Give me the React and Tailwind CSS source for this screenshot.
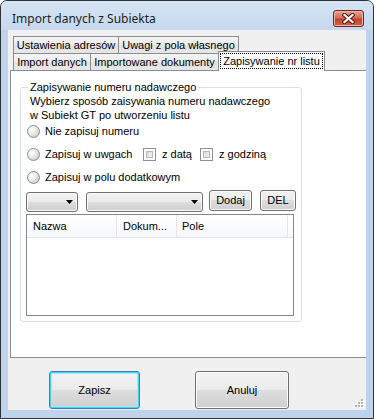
import React from 'react';

const btnBg = "bg-[linear-gradient(#f2f2f2,#ebebeb_50%,#dddddd_50%,#cfcfcf)]";
const tabBg = "bg-[linear-gradient(#f4f4f4,#ececec_50%,#e2e2e2_50%,#e6e6e6)]";

const Radio = () => (
  <svg width="13" height="13" viewBox="0 0 13 13" className="shrink-0">
    <defs>
      <radialGradient id="rg" cx="0.35" cy="0.35" r="0.7">
        <stop offset="0" stopColor="#ffffff" />
        <stop offset="0.6" stopColor="#e6e6e6" />
        <stop offset="1" stopColor="#c9c9c9" />
      </radialGradient>
    </defs>
    <circle cx="6.5" cy="6.5" r="6" fill="url(#rg)" stroke="#8e8f8f" />
  </svg>
);

const Check = () => (
  <div className="w-[13px] h-[13px] shrink-0 border border-[#8e8f8f] bg-white p-[2px]">
    <div className="w-full h-full border border-[#b6b8ba] bg-[linear-gradient(135deg,#d8d8d8,#f6f6f6)]" />
  </div>
);

const Combo = ({ w }) => (
  <div className={`${w} h-[20px] mt-[2px] rounded-[3px] border border-[#707070] ${btnBg} shadow-[inset_0_0_0_1px_#fbfbfb] flex items-center justify-end pr-[4px]`}>
    <svg width="7" height="4" viewBox="0 0 7 4"><path d="M0 0h7L3.5 4z" fill="#000" /></svg>
  </div>
);

const Tab = ({ w, label, first }) => (
  <div className={`${w} ${first ? '' : '-ml-px'} h-[17px] border border-b-0 border-[#898c95] ${tabBg} flex items-center justify-center leading-[13px]`}>
    {label}
  </div>
);

export default function App() {
  return (
    <div className="w-[374px] h-[419px] bg-white font-['Liberation_Sans',Arial,sans-serif] text-[11px] text-black">
      <div className="w-[374px] h-[419px] border border-[#2f3338] rounded-t-[7px] bg-[#bfd4ec] flex flex-col overflow-hidden">
        {/* title bar */}
        <div className="h-[29px] shrink-0 flex items-start pl-[11px] pr-[9px] bg-[linear-gradient(#d6e4f4,#c5d8ee)]">
          <span className="mt-[10px] text-[12px] leading-[16px] font-['Noto_Sans',sans-serif] text-[#1e1e1e]">Import danych z Subiekta</span>
          <div className="ml-auto mt-[9px] w-[31px] h-[17px] rounded-[3px] border border-[#6a2a1f] bg-[linear-gradient(#e8a594,#d26a55_45%,#c2412a_55%,#d0634a)] shadow-[inset_0_0_0_1px_#eeb3a4] flex items-center justify-center">
            <svg width="13" height="11" viewBox="0 0 13 11">
              <path d="M2.5 2 L10.5 9 M10.5 2 L2.5 9" stroke="#4d1a12" strokeWidth="4.2" strokeLinecap="square" />
              <path d="M2.5 2 L10.5 9 M10.5 2 L2.5 9" stroke="#ffffff" strokeWidth="2.2" strokeLinecap="square" />
            </svg>
          </div>
        </div>

        {/* client */}
        <div className="relative mx-[7px] h-[380px] bg-[#f0f0f0] flex flex-col overflow-hidden">
          <div className="mt-[6px] ml-[2px]">
            <div className="flex pl-[3px]">
              <Tab w="w-[106px]" label="Ustawienia adresów" first />
              <Tab w="w-[121px]" label="Uwagi z pola własnego" />
            </div>
            <div className="flex pl-[3px] h-[17px]">
              <Tab w="w-[78px]" label="Import danych" first />
              <Tab w="w-[129px]" label="Importowane dokumenty" />
              <div className="relative z-10 -ml-px -mt-[2px] w-[107px] h-[20px] shrink-0 border border-b-0 border-[#898c95] bg-white px-[1px] pt-[1px]">
                <div className="h-[16px] border border-dotted border-black flex items-center justify-center leading-[13px]">
                  Zapisywanie nr listu
                </div>
              </div>
            </div>

            {/* tab page */}
            <div className="w-[362px] h-[288px] border border-[#898c95] bg-white">
              <fieldset className="ml-[9px] mt-[10px] w-[280px] border border-[#d5dfe5] rounded-[3px]">
                <legend className="ml-[7px] px-[2px] leading-[13px]">Zapisywanie numeru nadawczego</legend>
                <div className="px-[5px] pb-[5px]">
                  <div className="pl-[4px] leading-[14px]">
                    <div>Wybierz sposób zaisywania numeru nadawczego</div>
                    <div>w Subiekt GT po utworzeniu listu</div>
                  </div>
                  <div className="flex items-center h-[19px] pl-[1px] gap-[5px]">
                    <Radio />
                    <span>Nie zapisuj numeru</span>
                  </div>
                  <div className="flex items-center h-[19px] mt-[4px] pl-[1px]">
                    <Radio />
                    <span className="ml-[5px] w-[98px]">Zapisuj w uwgach</span>
                    <Check />
                    <span className="ml-[6px] w-[38px]">z datą</span>
                    <Check />
                    <span className="ml-[6px]">z godziną</span>
                  </div>
                  <div className="flex items-center h-[19px] mt-[4px] pl-[1px] gap-[5px]">
                    <Radio />
                    <span>Zapisuj w polu dodatkowym</span>
                  </div>

                  <div className="flex items-start h-[22px] mt-[3px]">
                    <Combo w="w-[52px]" />
                    <div className="ml-[8px]"><Combo w="w-[117px]" /></div>
                    <div className={`ml-[6px] w-[43px] h-[21px] rounded-[3px] border border-[#707070] ${btnBg} shadow-[inset_0_0_0_1px_#fbfbfb] flex items-center justify-center`}>Dodaj</div>
                    <div className={`ml-[8px] w-[36px] h-[21px] rounded-[3px] border border-[#707070] ${btnBg} shadow-[inset_0_0_0_1px_#fbfbfb] flex items-center justify-center`}>DEL</div>
                  </div>

                  <div className="mt-[2px] w-[268px] h-[102px] border border-[#828790] bg-white">
                    <div className="flex h-[23px] border-b border-[#e5e5e5] bg-[linear-gradient(#ffffff,#f7f8fa)]">
                      <div className="w-[90px] border-r border-[#e5e5e5] flex items-center pl-[6px]">Nazwa</div>
                      <div className="w-[60px] border-r border-[#e5e5e5] flex items-center pl-[6px]">Dokum...</div>
                      <div className="w-[111px] border-r border-[#e5e5e5] flex items-center pl-[5px]">Pole</div>
                    </div>
                  </div>
                </div>
              </fieldset>
            </div>
          </div>

          <div className="flex mt-[13px] pl-[41px] gap-[55px]">
            <div className={`w-[91px] h-[38px] rounded-[3px] border border-[#3c7fb1] ${btnBg} shadow-[inset_0_0_0_1px_#48d0f8,inset_0_0_0_2px_#a8e6fb] flex items-center justify-center`}>Zapisz</div>
            <div className={`w-[94px] h-[38px] rounded-[3px] border border-[#707070] ${btnBg} shadow-[inset_0_0_0_1px_#fbfbfb] flex items-center justify-center`}>Anuluj</div>
          </div>

          {/* size grip */}
          <svg className="absolute right-[2px] bottom-[2px]" width="9" height="9" viewBox="0 0 9 9">
            {[[6, 0], [3, 3], [6, 3], [0, 6], [3, 6], [6, 6]].map(([x, y]) => (
              <g key={`${x}-${y}`}>
                <rect x={x + 1} y={y + 1} width="2" height="2" fill="#ffffff" />
                <rect x={x} y={y} width="2" height="2" fill="#b5b5b5" />
              </g>
            ))}
          </svg>
        </div>
      </div>
    </div>
  );
}
